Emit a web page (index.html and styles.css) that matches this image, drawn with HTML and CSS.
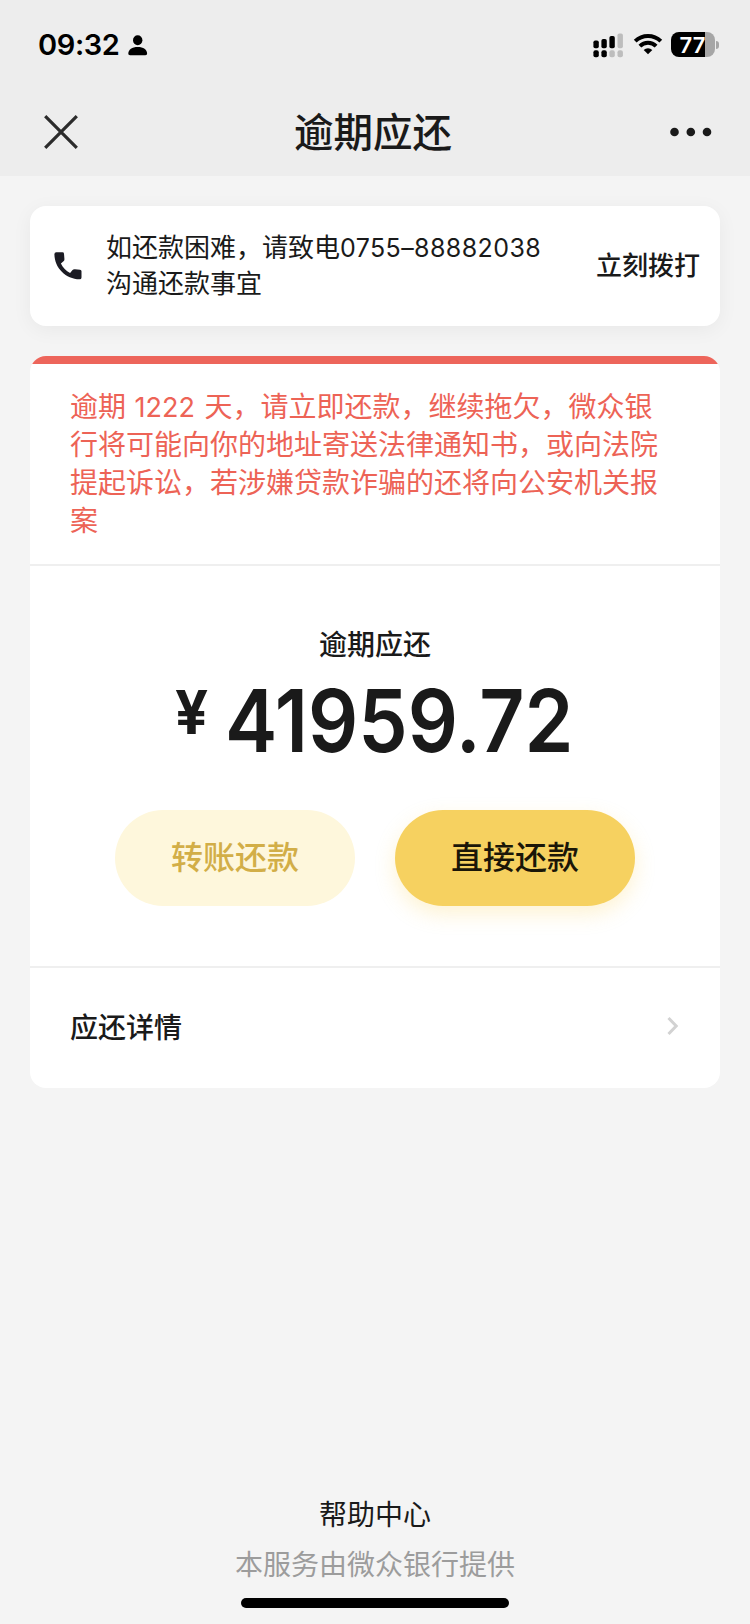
FILE: index.html
```html
<!DOCTYPE html>
<html lang="zh-CN">
<head>
<meta charset="utf-8">
<title>逾期应还</title>
<link rel="stylesheet" href="styles.css">
</head>
<body>
<div class="page">
  <header class="top">
    <div class="status">
      <div class="status-left">
        <span class="time">09:32</span>
        <svg class="person" width="20" height="22" viewBox="0 0 20 22"><ellipse cx="9.7" cy="5.2" rx="4.7" ry="5"/><path d="M.3 18.6C.3 14.6 4 12 9.7 12s9.4 2.6 9.4 6.6c0 1.1-.6 1.7-1.8 1.7H2.1C.9 20.300.3 19.700.3 18.600z"/></svg>
      </div>
      <div class="status-right">
        <svg class="signal" width="31" height="26" viewBox="0 0 31 26"><rect x=".4" y="7.500" width="5.400" height="7.700" rx="1.800"/><rect x="8.400" y="6" width="5.400" height="9.200" rx="1.800"/><rect x="16.400" y="3" width="5.400" height="12.200" rx="1.800"/><rect x="24.500" y=".5" width="5.400" height="14.700" rx="1.800" fill="#bdbdbd"/><rect x=".4" y="17.300" width="5.400" height="7" rx="2"/><rect x="8.400" y="17.300" width="5.400" height="7" rx="2"/><rect x="16.400" y="17.300" width="5.400" height="7" rx="2" fill="#bdbdbd"/><rect x="24.500" y="17.300" width="5.400" height="7" rx="2" fill="#bdbdbd"/></svg>
        <svg class="wifi" width="30" height="22" viewBox="0 0 30 22"><path d="M2.200 8.100A18.600 18.600 0 0 1 27.800 8.100M6.900 13.100A11.600 11.600 0 0 1 23.100 13.100" fill="none" stroke="#000" stroke-width="4"/><path d="M10.700 16.900a6.200 6.200 0 0 1 8.600 0L15 21.300z"/></svg>
        <div class="battery"><span class="level">77</span><i class="nub"></i></div>
      </div>
    </div>
    <nav class="nav">
      <svg width="34" height="34" viewBox="0 0 34 34"><path d="M1.200 1.200l31.600 31.600M32.800 1.200L1.200 32.800" fill="none" stroke="#2b2b2b" stroke-width="3.200"/></svg>
      <h1 class="title">逾期应还</h1>
      <svg width="42" height="10" viewBox="0 0 42 10" fill="#1a1a1a"><circle cx="4.500" cy="5" r="4.300"/><circle cx="20.800" cy="5" r="4.300"/><circle cx="37" cy="5" r="4.300"/></svg>
    </nav>
  </header>

  <main class="content">
    <section class="card call">
      <svg class="phone" width="28" height="28" viewBox="0 0 28 28"><path d="M2.300.3H8.500Q9.900.3 10 1.700L10.400 6.700Q10.600 8.400 9.500 9.300L6.900 11.500C8.900 15.600 12 18.900 16.100 20.900L18.300 18.300Q19.300 17 21 17.200L26 17.700Q27.500 17.900 27.500 19.300V25.400Q27.500 27.300 25.600 27.300C11.800 27 .6 16 .4 2.200Q.4.300 2.300.3z" fill="#1b1b23"/></svg>
      <p class="call-text">如还款困难，请致电<span class="tel">0755–88882038</span><br>沟通还款事宜</p>
      <span class="call-action">立刻拨打</span>
    </section>

    <section class="card bill">
      <div class="stripe"></div>
      <p class="warning">逾期<span class="days"> 1222 </span>天，请立即还款，继续拖欠，微众银<br>行将可能向你的地址寄送法律通知书，或向法院<br>提起诉讼，若涉嫌贷款诈骗的还将向公安机关报<br>案</p>
      <div class="due">
        <h2 class="due-label">逾期应还</h2>
        <div class="amount"><span class="yen">¥</span><span class="number">41959.72</span></div>
        <div class="actions">
          <button class="btn btn-light">转账还款</button>
          <button class="btn btn-solid">直接还款</button>
        </div>
      </div>
      <div class="detail">
        <span>应还详情</span>
        <svg width="12" height="20" viewBox="0 0 12 20"><path d="M1.500 2l7.700 8-7.700 8" fill="none" stroke="#d2d2d2" stroke-width="3"/></svg>
      </div>
    </section>
  </main>

  <footer class="footer">
    <span class="help">帮助中心</span>
    <span class="provider">本服务由微众银行提供</span>
    <div class="home-bar"></div>
  </footer>
</div>
</body>
</html>
```
FILE: styles.css
```css
* { box-sizing: border-box; margin: 0; padding: 0; }
body {
  background: #f4f4f4;
  color: #1a1a1a;
  font-family: "Noto Sans CJK SC", sans-serif;
}
.page { width: 750px; height: 1624px; display: flex; flex-direction: column; }
svg { display: block; flex: none; }

.top { height: 176px; background: #ededed; flex: none; }
.status { height: 88px; display: flex; justify-content: space-between; padding: 0 31px 0 38px; }
.status-left { display: flex; align-items: flex-start; padding-top: 27px; gap: 9px; }
.time { font: 600 29px/36px Inter, sans-serif; color: #000; width: 81px; white-space: nowrap; letter-spacing: -.4px; }
.person { margin-top: 8px; }
.status-right { display: flex; align-items: flex-start; padding-top: 32px; }
.signal { margin: 1px 0 0 1px; }
.wifi { margin: 1px 8px 0 9px; }
.battery {
  position: relative; width: 44px; height: 25px; margin-right: 4px;
  border-radius: 8px;
  background: linear-gradient(90deg, #000 34px, #a6a6a6 34px);
}
.level { display: block; width: 43px; text-align: center; font: 600 22px/26px Inter, sans-serif; color: #fff; }
.nub { position: absolute; left: 45px; top: 9px; width: 3px; height: 8px; background: #a6a6a6; border-radius: 0 3px 3px 0; }
.nav { height: 88px; display: flex; align-items: center; justify-content: space-between; padding: 0 38px 0 44px; }
.title { font-size: 39.5px; line-height: 56px; font-weight: 500; padding-bottom: 5px; margin-right: 2px; }

.content { padding: 30px 30px 0; display: flex; flex-direction: column; gap: 30px; }
.card { background: #fff; border-radius: 16px; }
.call {
  height: 120px; display: flex; align-items: center; padding: 0 20px 0 24px;
  box-shadow: 0 4px 20px rgba(0, 0, 0, .05);
}
.call-text { margin-left: 24px; padding-bottom: 4px; flex: 1; font-size: 26px; line-height: 36px; white-space: nowrap; }
.tel { font-family: Inter, sans-serif; font-weight: 400; font-size: 25px; line-height: 1; letter-spacing: .4px; }
.call-action { font-size: 26px; line-height: 36px; font-weight: 500; padding-bottom: 4px; }

.bill { height: 732px; overflow: hidden; }
.stripe { height: 8px; background: #ed655b; }
.warning {
  height: 202px; padding: 22px 40px 0; border-bottom: 2px solid #efefef;
  color: #ed6356; font-size: 28px; line-height: 38px; white-space: nowrap;
}
.days { font-family: Inter, sans-serif; font-weight: 400; white-space: pre; font-size: 27px; line-height: 1; margin: 0 2px 0 1px; }
.due { height: 402px; border-bottom: 2px solid #efefef; display: flex; flex-direction: column; align-items: center; padding-top: 57px; }
.due-label { font-size: 28px; line-height: 40px; font-weight: 500; }
.amount { width: 400px; height: 88px; margin: 14px 0 15px; display: flex; align-items: flex-start; }
.number { font: 600 87px/88px Inter, sans-serif; transform: scaleX(.903); transform-origin: left; }
.yen { width: 50px; flex: none; font: 700 60px/60px Inter, sans-serif; padding-top: 5px; transform: scaleX(.97); transform-origin: left; }
.actions { display: flex; gap: 40px; margin-top: 30px; }
.btn { width: 240px; height: 96px; border: 0; border-radius: 48px; font: 500 32px/90px "Noto Sans CJK SC", sans-serif; padding-bottom: 6px; }
.btn-light { background: #fef7dc; color: #d2ae47; }
.btn-solid { background: #f6d160; color: #1a1608; box-shadow: 0 8px 20px rgba(250, 209, 80, .25); }
.detail { height: 120px; display: flex; align-items: center; justify-content: space-between; padding: 0 41px 4px 40px; font-size: 28px; font-weight: 500; }

.footer { margin-top: auto; height: 131px; display: flex; flex-direction: column; align-items: center; font-size: 28px; line-height: 40px; }
.provider { margin-top: 10px; color: #9c9c9c; }
.home-bar { margin-top: 15px; width: 268px; height: 10px; border-radius: 5px; background: #000; }
```
